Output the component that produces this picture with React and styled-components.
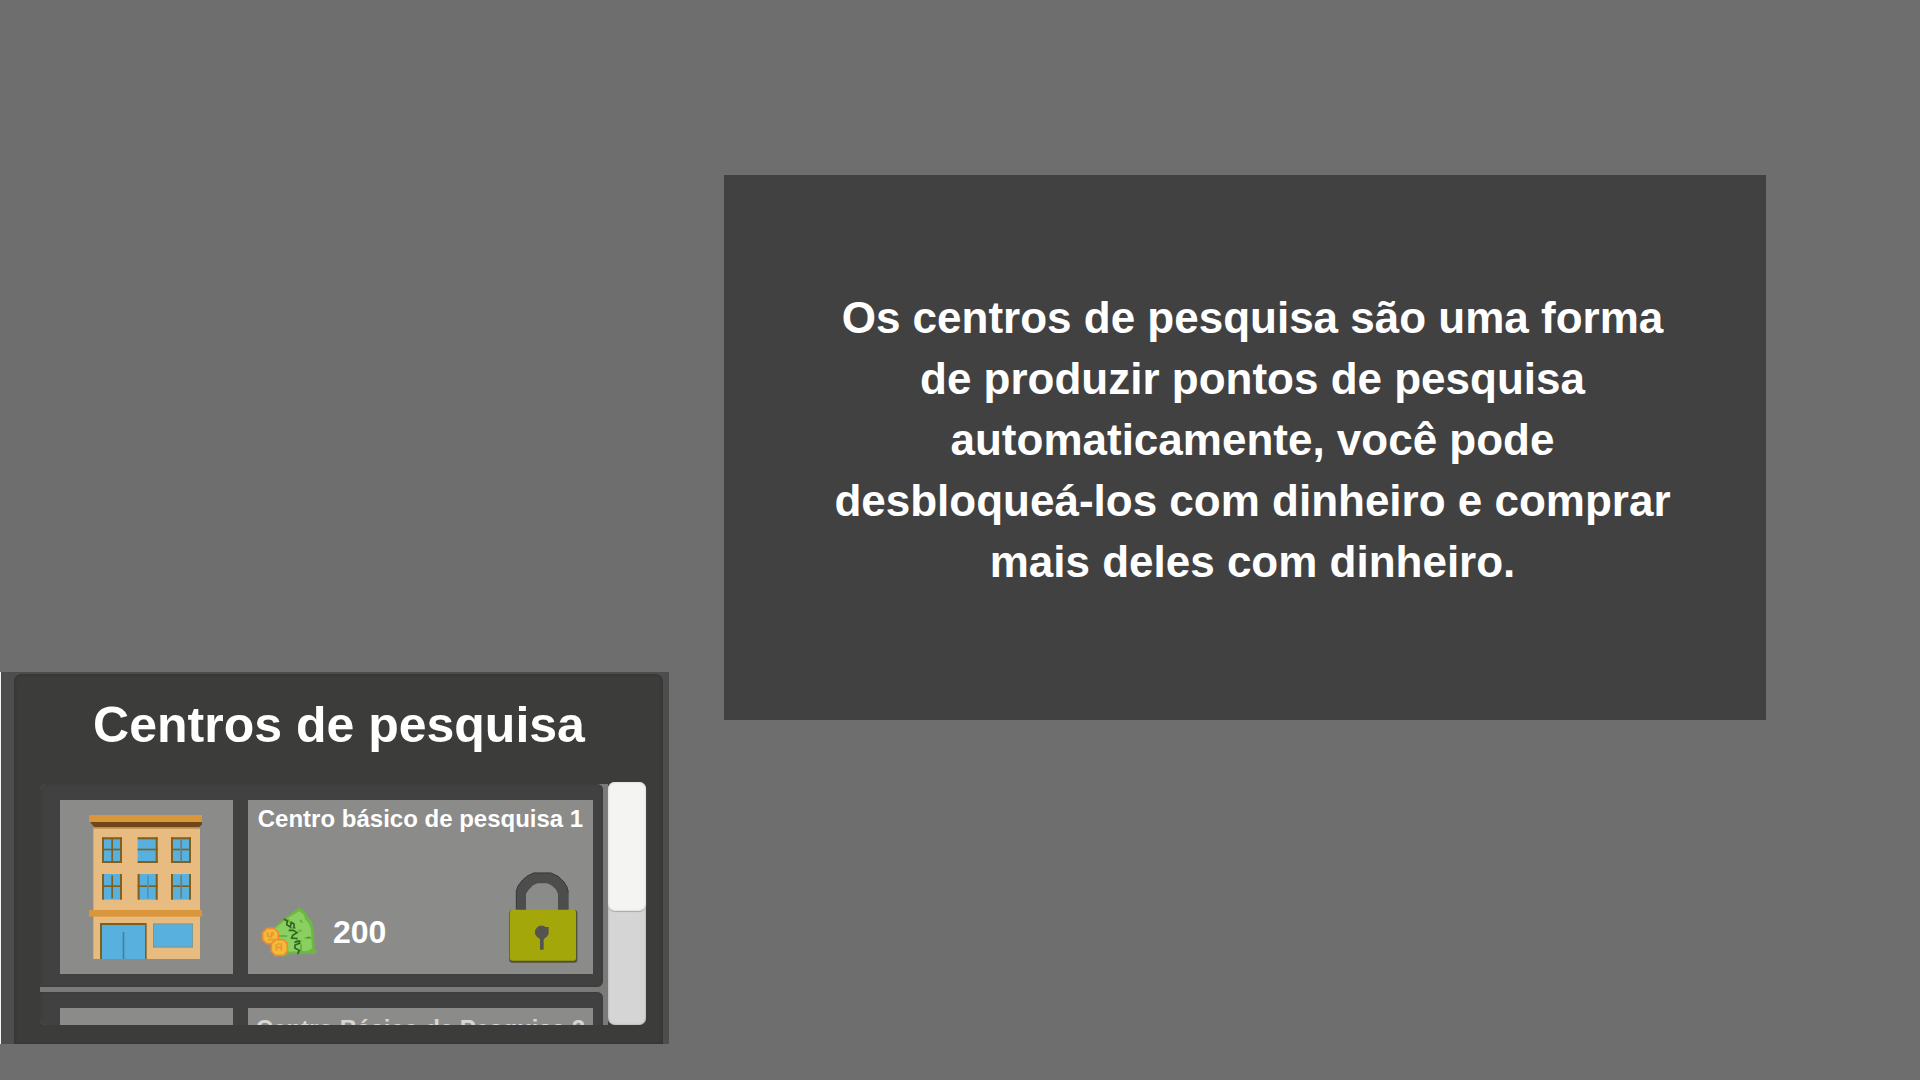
import React from "react";
import styled, { createGlobalStyle } from "styled-components";

const GlobalStyle = createGlobalStyle`
  * { box-sizing: border-box; }
  body {
    margin: 0;
    background: #6e6e6e;
    color: #fff;
    font-family: "Liberation Sans", Arial, sans-serif;
    font-weight: 700;
  }
  h2, h3, p { margin: 0; font-weight: 700; }
`;

const Page = styled.main`
  display: grid;
  grid-template-columns: 669px minmax(0, 1fr);
  column-gap: 55px;
  min-height: 100vh;
  padding: 175px 154px 36px 0;
`;

const Explanation = styled.section`
  grid-column: 2;
  grid-row: 1;
  align-self: start;
  padding: 112px 92px 128px 107px;
  background: #414141;
`;

const ExplanationText = styled.p`
  font-size: 44px;
  line-height: 61px;
  text-align: center;
`;

const Widget = styled.aside`
  grid-column: 1;
  grid-row: 1;
  align-self: end;
  padding: 2px 6px 0 13px;
  border-left: 1px solid #f4f4f2;
  background: #4c4d4c;
`;

const WidgetBody = styled.div`
  padding: 20px 17px 19px 26px;
  border-radius: 8px 8px 0 0;
  background: #3c3c3a;
  box-shadow: inset 0 0 3px #2e2e2d;
`;

const WidgetTitle = styled.h2`
  margin-bottom: 26px;
  padding-right: 8px;
  font-size: 50px;
  line-height: 62px;
  text-align: center;
`;

const ScrollArea = styled.div`
  display: flex;
  height: 243px;
`;

const CardList = styled.div`
  flex: 1;
  display: flex;
  flex-direction: column;
  gap: 5px;
  margin-top: 2px;
  padding-right: 5px;
  overflow: hidden;
  border-radius: 6px 0 0 6px;
  background: #7a7a78;
`;

const Card = styled.article`
  flex: none;
  display: flex;
  gap: 15px;
  padding: 16px 10px 13px 20px;
  border-radius: 0 6px 6px 0;
  background: #414141;
  box-shadow: inset 0 0 3px #373737;
`;

const Thumb = styled.div`
  display: grid;
  place-items: center;
  width: 173px;
  height: 174px;
  padding-right: 2px;
  background: #8b8b89;
`;

const Info = styled.div`
  flex: 1;
  display: flex;
  flex-direction: column;
  justify-content: space-between;
  padding: 4px 0 11px;
  background: #8b8b89;
`;

const CardTitle = styled.h3`
  color: ${(p) => (p.$muted ? "#d6d6d5" : "#fff")};
  font-size: 24px;
  line-height: ${(p) => (p.$muted ? "34px" : "30px")};
  text-align: center;
  white-space: nowrap;
`;

const CardFooter = styled.div`
  display: flex;
  justify-content: space-between;
  align-items: flex-end;
  padding: 0 15px 0 12px;
`;

const Price = styled.p`
  display: flex;
  align-items: center;
  gap: 16px;
  padding-bottom: 6px;
  font-size: 32px;
  line-height: 50px;
`;

const LockButton = styled.button`
  display: block;
  padding: 0;
  border: 0;
  background: none;
  cursor: pointer;
`;

const Picture = styled.svg`
  display: block;
`;

const Track = styled.div`
  width: 38px;
  border-radius: 7px;
  background: #d5d5d5;
  box-shadow: inset 0 0 2px #999;
`;

const ScrollHandle = styled.div`
  height: 129px;
  border-radius: 7px;
  background: #f4f4f2;
  box-shadow: inset 0 0 2px #bbb, 0 1px 1px #aaa;
`;

function PanedWindow({ x, y, mullion = "#80601f", top = true, bottom = true, left = true }) {
  return (
    <g>
      <rect x={x} y={y} width="60" height="77" fill="#58b0df" />
      <g fill="#80601f">
        {left && <rect x={x} y={y} width="6" height="77" />}
        <rect x={x + 54} y={y} width="6" height="77" />
        {top && <rect x={x} y={y} width="60" height="6" />}
        {bottom && <rect x={x} y={y + 71} width="60" height="6" />}
        <rect x={x} y={y + 34} width="60" height="5" />
      </g>
      {mullion && <rect x={x + 28} y={y + 4} width="5" height="69" fill={mullion} />}
    </g>
  );
}

function Building() {
  return (
    <Picture width="113" height="144" viewBox="57 45 339 432" aria-hidden="true">
      <rect x="70" y="80" width="320" height="397" fill="#e8bb80" />
      <path d="M60 65H396V73L388 81H72Z" fill="#704817" />
      <rect x="70" y="81" width="320" height="5" fill="#b88b52" />
      <rect x="57" y="45" width="339" height="21" fill="#d9963b" />
      <PanedWindow x={96} y={112} />
      <PanedWindow x={203} y={112} mullion={null} left={false} />
      <PanedWindow x={303} y={112} mullion="#787c70" />
      <PanedWindow x={96} y={222} top={false} bottom={false} />
      <PanedWindow x={203} y={222} top={false} bottom={false} mullion="#4b94b8" />
      <PanedWindow x={303} y={222} top={false} bottom={false} mullion="#787c70" />
      <rect x="57" y="330" width="339" height="20" fill="#d9963b" />
      <rect x="90" y="369" width="140" height="108" fill="#80601f" />
      <rect x="96" y="375" width="129" height="102" fill="#58b0df" />
      <rect x="158" y="396" width="5" height="81" fill="#47809c" />
      <rect x="249" y="370" width="120" height="73" fill="#8b9278" />
      <rect x="252" y="373" width="115" height="67" fill="#58b0df" />
    </Picture>
  );
}

function Money() {
  return (
    <Picture width="57" height="50" viewBox="60 81 171 150" aria-hidden="true">
      <path d="M178 82L196 96L205 113L216 124L222 162L224 207L231 214L226 222L148 223L133 230L116 204L103 141L137 112Z" fill="#6cb842" />
      <path d="M177 94L190 102L196 119L206 129L213 150L216 205L204 212L148 215L112 184L106 145L139 118Z" fill="#8bcf61" />
      <path d="M134 120H145L153 132M148 144H168M114 168H142M168 183H185M180 120L187 128M174 152H185M183 193V214M194 174H215" fill="none" stroke="#68b441" strokeWidth="6" />
      <path d="M131 117L142 123L140 134L151 141L154 127L162 132V145M146 151H160L171 158L158 166L155 174L173 176M163 187L177 183L179 190L165 195V205L178 211L173 222" fill="none" stroke="#2e6424" strokeWidth="5" />
      <path d="M201 172H211" stroke="#58814f" strokeWidth="4" />
      <g fill="#f0bd35" stroke="#ed8b36" strokeWidth="5">
        <path d="M81 145H102L115 157V180L104 191H81L68 179V158Z" />
        <path d="M107 179H131L142 191V214L131 226H106L94 214V191Z" />
      </g>
      <path d="M83 156V168L94 171V157M99 156V167M84 179H102M109 192V213M124 190V212M110 203H125M116 188V196" fill="none" stroke="#ec963a" strokeWidth="5" />
    </Picture>
  );
}

function Lock() {
  return (
    <Picture width="70" height="92" viewBox="54 33 210 276" aria-hidden="true">
      <path d="M78 150V93L83 78L96 61L111 48L131 38H183L204 48L222 65L231 80L236 97V150H204V101L197 87L184 76L171 70H143L129 76L116 89L108 101V150Z" fill="#4d4d4d" />
      <path d="M79 147V93L84 78L98 60L112 48L131 39H183L204 49L222 66L231 81L235 97" fill="none" stroke="#3a3a3a" strokeWidth="3" />
      <rect x="58" y="150" width="204" height="158" rx="9" fill="#50513a" />
      <rect x="60" y="149" width="198" height="153" rx="8" fill="#a4a70a" />
      <path d="M148 197H161L166 201H176V222L170 231L161 237V269H150V237L141 231L135 222V211L142 202Z" fill="#555550" />
    </Picture>
  );
}

const centers = [
  { name: "Centro básico de pesquisa 1", price: 200 },
  { name: "Centro Básico de Pesquisa 2", muted: true },
];

export default function App() {
  return (
    <>
      <GlobalStyle />
      <Page>
        <Explanation>
          <ExplanationText>
            Os centros de pesquisa são uma forma de produzir pontos de pesquisa
            automaticamente, você pode desbloqueá-los com dinheiro e comprar mais
            deles com dinheiro.
          </ExplanationText>
        </Explanation>
        <Widget>
          <WidgetBody>
            <WidgetTitle>Centros de pesquisa</WidgetTitle>
            <ScrollArea>
              <CardList>
                {centers.map((center) => (
                  <Card key={center.name}>
                    <Thumb>{center.price && <Building />}</Thumb>
                    <Info>
                      <CardTitle $muted={center.muted}>{center.name}</CardTitle>
                      {center.price && (
                        <CardFooter>
                          <Price>
                            <Money />
                            {center.price}
                          </Price>
                          <LockButton type="button" aria-label="Desbloquear">
                            <Lock />
                          </LockButton>
                        </CardFooter>
                      )}
                    </Info>
                  </Card>
                ))}
              </CardList>
              <Track>
                <ScrollHandle />
              </Track>
            </ScrollArea>
          </WidgetBody>
        </Widget>
      </Page>
    </>
  );
}
